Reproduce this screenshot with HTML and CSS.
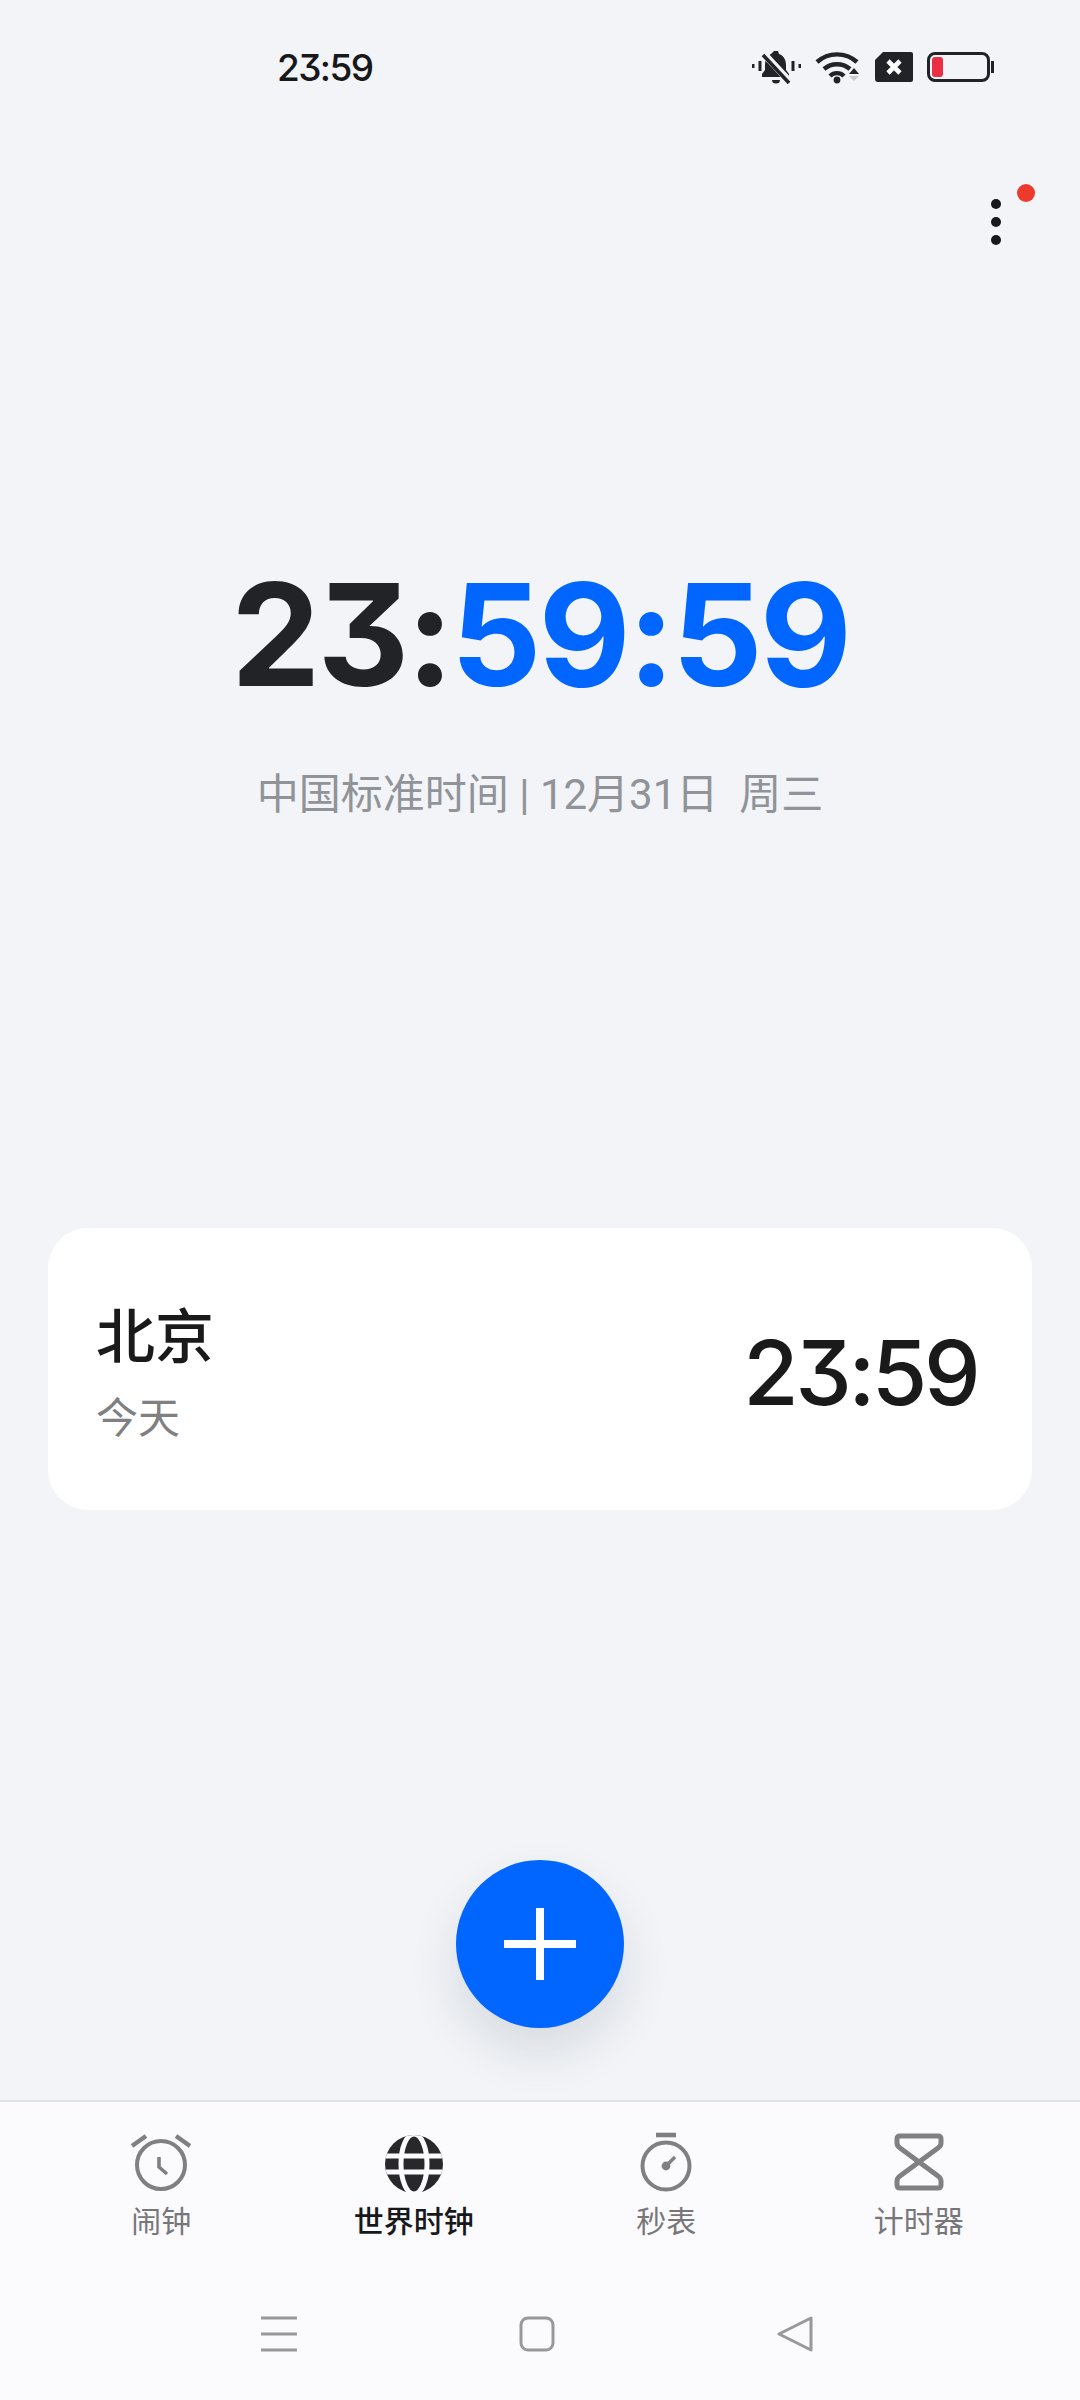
FILE: index.html
```html
<!DOCTYPE html>
<html lang="zh-CN">
<head>
    <meta charset="UTF-8">
    <meta name="viewport" content="width=device-width, initial-scale=1.0">
    <title>世界时钟</title>
    <link rel="stylesheet" href="styles.css">
</head>
<body>
    <div class="status-bar">
        <span class="status-time">23:59</span>
        <div class="status-icons">
            <svg class="icon-bell" width="49" height="34" viewBox="0 0 49 34">
                <path fill="#222326" d="M22 1h4l1 3c5 2 7 6 7 11v5l3 4v3H10v-3l3-4v-5c0-5 2-9 6-11z"/>
                <path fill="#222326" d="M20 30h8a4 3.5 0 0 1-8 0z"/>
                <path stroke="#f2f4f7" stroke-width="7" d="M11 3l27 29"/>
                <path stroke="#222326" stroke-width="3.6" d="M11 5l26 28"/>
                <path stroke="#222326" stroke-width="3" d="M1 14v4M8 11v10M41 11v10M48 14v4"/>
            </svg>
            <svg class="icon-wifi" width="46" height="34" viewBox="0 0 46 34">
                <g fill="none" stroke="#222326" stroke-width="4.4">
                    <path d="M2 12a30 30 0 0 1 40 0"/>
                    <path d="M9 19a20 20 0 0 1 26 0"/>
                    <path d="M15 26a10 10 0 0 1 14 0"/>
                </g>
                <circle cx="22" cy="30" r="3.4" fill="#222326"/>
                <path fill="#222326" d="M39 18l5 6H34z"/>
                <path fill="#c9cbd0" d="M34 26h10l-5 5z"/>
            </svg>
            <svg class="icon-sim" width="38" height="30" viewBox="0 0 38 30">
                <path fill="#222326" d="M8 0h28a2 2 0 0 1 2 2v26a2 2 0 0 1-2 2H3a3 3 0 0 1-3-3V8z"/>
                <path stroke="#fff" stroke-width="4.6" d="M13 9l12 12M25 9L13 21"/>
            </svg>
            <div class="battery">
                <div class="battery-body">
                    <div class="battery-level"></div>
                </div>
                <div class="battery-tip"></div>
            </div>
        </div>
    </div>

    <div class="toolbar">
        <div class="more-btn">
            <span class="more-dot"></span>
            <span class="more-dot"></span>
            <span class="more-dot"></span>
            <span class="red-dot"></span>
        </div>
    </div>

    <div class="clock">
        <div class="clock-big"><span class="dark">23:</span>59:59</div>
        <div class="clock-sub">中国标准时间 | 12月31日&nbsp; 周三</div>
    </div>

    <div class="city-card">
        <div class="city-info">
            <div class="city-name">北京</div>
            <div class="city-day">今天</div>
        </div>
        <div class="city-time">23:59</div>
    </div>

    <div class="fab-row">
        <div class="fab">
            <svg width="72" height="72" viewBox="0 0 72 72">
                <path stroke="#fff" stroke-width="8" d="M36 0v72M0 36h72"/>
            </svg>
        </div>
    </div>

    <div class="tabs">
        <div class="tab">
            <svg width="60" height="60" viewBox="0 0 60 60">
                <g fill="none" stroke="#808083" stroke-width="4">
                    <circle cx="30" cy="33" r="24"/>
                    <path d="M1 14L15 4M59 14L45 4" stroke-width="4.4"/>
                    <path d="M28 25v10l8 7" stroke-width="3.6"/>
                </g>
            </svg>
            <span>闹钟</span>
        </div>
        <div class="tab active">
            <svg width="60" height="60" viewBox="0 0 60 60">
                <defs>
                    <clipPath id="globe-clip"><circle cx="30" cy="32" r="29"/></clipPath>
                </defs>
                <circle cx="30" cy="32" r="29" fill="#28282c"/>
                <g clip-path="url(#globe-clip)" fill="none" stroke="#fbfafd" stroke-width="5">
                    <ellipse cx="30" cy="32" rx="13" ry="30"/>
                    <path d="M-2 24h64M-2 40h64"/>
                </g>
            </svg>
            <span>世界时钟</span>
        </div>
        <div class="tab">
            <svg width="60" height="60" viewBox="0 0 60 60">
                <g fill="none" stroke="#808083">
                    <circle cx="30" cy="34" r="23.5" stroke-width="4"/>
                    <path d="M20 3h20" stroke-width="4.6"/>
                    <path d="M30 34l9-9" stroke-width="3.4"/>
                </g>
                <circle cx="30" cy="34" r="4.4" fill="#808083"/>
            </svg>
            <span>秒表</span>
        </div>
        <div class="tab">
            <svg width="60" height="60" viewBox="0 0 60 60">
                <path fill="none" stroke="#808083" stroke-width="5" stroke-linejoin="round"
                      d="M11 4h38q3 0 3 3v4q0 3-3 5L11 44q-3 2-3 5v4q0 3 3 3h38q3 0 3-3v-4q0-3-3-5L11 16q-3-2-3-5V7q0-3 3-3z"/>
            </svg>
            <span>计时器</span>
        </div>
    </div>

    <div class="nav-bar">
        <svg width="36" height="36" viewBox="0 0 36 36">
            <path stroke="#98989c" stroke-width="3.2" d="M0 2h36M0 18h36M0 34h36"/>
        </svg>
        <svg width="36" height="36" viewBox="0 0 36 36">
            <rect x="2" y="2" width="32" height="32" rx="7" fill="none" stroke="#98989c" stroke-width="3"/>
        </svg>
        <svg width="36" height="36" viewBox="0 0 36 36">
            <path fill="none" stroke="#98989c" stroke-width="3" stroke-linejoin="round" d="M2 18L34 2v32z"/>
        </svg>
    </div>
</body>
</html>
```

FILE: styles.css
```css
html, body {
    margin: 0;
    padding: 0;
}
body {
    display: flex;
    flex-direction: column;
    width: 1080px;
    height: 2400px;
    overflow: hidden;
    background-color: #f2f4f7;
    font-family: "Roboto", "Noto Sans CJK SC", sans-serif;
}

/* status bar */
.status-bar {
    display: flex;
    justify-content: space-between;
    align-items: center;
    height: 134px;
    padding: 0 86px 0 277px;
    box-sizing: border-box;
}
.status-time {
    font-family: "Inter", sans-serif;
    font-feature-settings: "cv09";
    font-size: 37px;
    font-weight: 500;
    letter-spacing: -1.6px;
    color: #17181a;
}
.status-icons {
    display: flex;
    align-items: center;
    gap: 14px;
}
.battery {
    display: flex;
    align-items: center;
    gap: 1px;
}
.battery-body {
    width: 63px;
    height: 30px;
    padding: 2px;
    box-sizing: border-box;
    border: 3px solid #222326;
    border-radius: 8px;
}
.battery-level {
    width: 11px;
    height: 20px;
    background-color: #ea2f45;
    border-radius: 3px;
}
.battery-tip {
    width: 3px;
    height: 12px;
    background-color: #222326;
}

/* three dot menu */
.toolbar {
    display: flex;
    justify-content: flex-end;
    height: 124px;
    padding-right: 64px;
}
.more-btn {
    position: relative;
    display: flex;
    flex-direction: column;
    align-items: center;
    gap: 8px;
    width: 40px;
    padding-top: 65px;
}
.more-dot {
    width: 10px;
    height: 10px;
    background-color: #17181a;
    border-radius: 50%;
}
.red-dot {
    position: absolute;
    top: 50px;
    left: 41px;
    width: 18px;
    height: 18px;
    background-color: #ec3a2c;
    border-radius: 50%;
}

/* main clock */
.clock {
    margin-top: 288px;
    text-align: center;
}
.clock-big {
    font-family: "Inter", sans-serif;
    font-feature-settings: "cv09";
    font-size: 142px;
    font-weight: 700;
    line-height: 176px;
    letter-spacing: -3px;
    color: #0066ff;
}
.clock-big .dark {
    color: #222326;
}
.clock-sub {
    margin-top: 43px;
    font-size: 42px;
    line-height: 60px;
    color: #909398;
}

/* city row */
.city-card {
    display: flex;
    justify-content: space-between;
    align-items: center;
    height: 282px;
    margin: 0 48px;
    margin-top: 403px;
    padding: 0 55px 0 48px;
    box-sizing: border-box;
    background-color: #fff;
    border-radius: 40px;
}
.city-info {
    padding-top: 9px;
}
.city-name {
    font-size: 59px;
    font-weight: 500;
    line-height: 76px;
    color: #1a1a1a;
}
.city-day {
    margin-top: 15px;
    font-size: 42px;
    line-height: 56px;
    color: #808083;
}
.city-time {
    padding-top: 6px;
    font-family: "Inter", sans-serif;
    font-feature-settings: "cv09";
    font-size: 90px;
    font-weight: 500;
    letter-spacing: -3.6px;
    color: #1a1a1a;
}

/* add button */
.fab-row {
    display: flex;
    justify-content: center;
    margin-top: 350px;
}
.fab {
    display: flex;
    justify-content: center;
    align-items: center;
    width: 168px;
    height: 168px;
    background-color: #0066ff;
    border-radius: 50%;
    box-shadow: 0 24px 48px rgba(60, 70, 90, 0.14);
}

/* bottom tabs */
.tabs {
    display: grid;
    grid-template-columns: repeat(4, 1fr);
    margin-top: auto;
    height: 160px;
    padding: 30px 35px 0;
    box-sizing: border-box;
    background-color: #fbfafd;
    border-top: 2px solid #e2e2e6;
}
.tab {
    display: flex;
    flex-direction: column;
    align-items: center;
    font-size: 30px;
    line-height: 40px;
    color: #77777a;
}
.tab.active {
    font-weight: 500;
    color: #17181a;
}
.tab span {
    margin-top: 10px;
}

/* system navigation */
.nav-bar {
    display: flex;
    justify-content: center;
    align-items: center;
    gap: 222px;
    height: 140px;
    padding: 8px 6px 0 0;
    box-sizing: border-box;
    background-color: #fbfafd;
}
```
